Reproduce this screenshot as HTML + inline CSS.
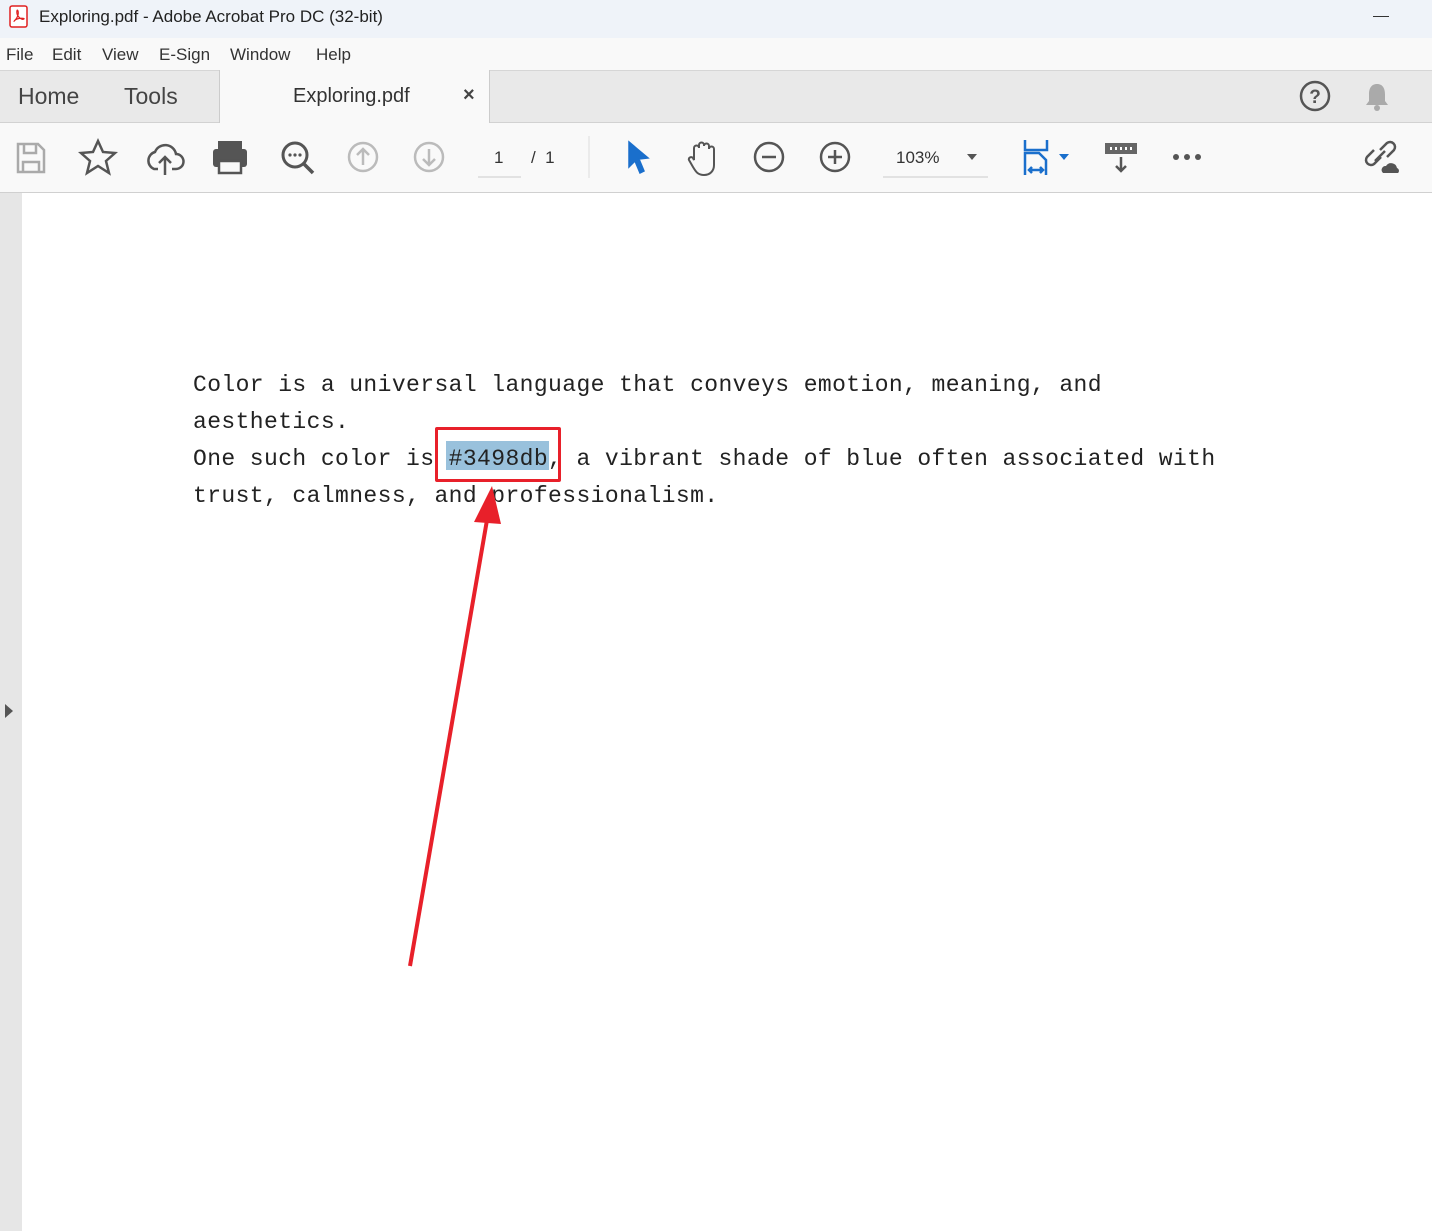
<!DOCTYPE html><html><head><style>
body{margin:0;width:1432px;height:1231px;position:relative;overflow:hidden;font-family:"Liberation Sans",sans-serif;background:#fff}
.a{position:absolute}
.t{color:#222;font-size:17px}
.m{font-size:17px;color:#333;top:45px}
.doc{font-family:"Liberation Mono",monospace;font-size:23px;letter-spacing:0.4px;color:#222;white-space:pre;line-height:37px}
</style></head><body>
<div class="a" style="left:0;top:0;width:1432px;height:38px;background:#eff3f9"></div>
<svg class="a" style="left:9px;top:5px" width="20" height="24"><rect x="1" y="1" width="17" height="21" rx="2" fill="#fff" stroke="#e02020" stroke-width="1.5"/><path d="M5 16c3-2 5-7 4-10s-2 2 0 5 5 4 6 3-4-1-7 0-3 3-3 2" fill="none" stroke="#e02020" stroke-width="1.2"/></svg>
<div class="a t" style="left:39px;top:7px">Exploring.pdf - Adobe Acrobat Pro DC (32-bit)</div>
<div class="a" style="left:1373px;top:16px;width:16px;height:1px;background:#333"></div>
<div class="a" style="left:0;top:38px;width:1432px;height:32px;background:#f9f9f9;border-bottom:1px solid #d6d6d6"></div>
<div class="a m" style="left:6px">File</div><div class="a m" style="left:52px">Edit</div><div class="a m" style="left:102px">View</div><div class="a m" style="left:159px">E-Sign</div><div class="a m" style="left:230px">Window</div><div class="a m" style="left:316px">Help</div>
<div class="a" style="left:0;top:71px;width:1432px;height:51px;background:#e9e9e9;border-bottom:1px solid #d2d2d2"></div>
<div class="a" style="left:219px;top:70px;width:269px;height:53px;background:#f9f9f9;border-left:1px solid #ccc;border-right:1px solid #ccc"></div>
<div class="a" style="left:18px;top:83px;font-size:23px;color:#444">Home</div>
<div class="a" style="left:124px;top:83px;font-size:23px;color:#444">Tools</div>
<div class="a" style="left:293px;top:85px;font-size:20px;color:#333">Exploring.pdf</div>
<div class="a" style="left:463px;top:84px;font-size:20px;color:#444;font-weight:bold">×</div>
<svg class="a" style="left:1298px;top:80px" width="34" height="34"><circle cx="17" cy="16" r="14" fill="none" stroke="#555" stroke-width="2.5"/><text x="17" y="23" font-size="19" text-anchor="middle" fill="#555" font-family="Liberation Sans" font-weight="bold">?</text></svg>
<svg class="a" style="left:1362px;top:81px" width="30" height="32"><path d="M15 3c-6 0-8 5-8 10v7l-3 4h22l-3-4v-7c0-5-2-10-8-10z" fill="#aaa"/><circle cx="15" cy="27" r="3" fill="#aaa"/></svg>
<div class="a" style="left:0;top:123px;width:1432px;height:69px;background:#f9f9f9;border-bottom:1px solid #d0d0d0"></div>
<svg class="a" style="left:0;top:123px" width="1432" height="69" fill="none" stroke-width="2.5">
<g stroke="#aaa"><path d="M18 21h20l6 6v22H18z"/><path d="M24 21v9h12v-9M23 49v-10h16v10"/></g>
<path d="M98 18l5 11 12 1-9 8 3 12-11-7-11 7 3-12-9-8 12-1z" stroke="#555"/>
<path d="M158 46h-4a9 9 0 0 1 1-17 11 11 0 0 1 21 2 7 7 0 0 1 0 15h-4M165 52V34m-6 6 6-6 6 6" stroke="#555"/>
<g fill="#555"><rect x="218" y="18" width="24" height="8"/><rect x="213" y="26" width="34" height="18" rx="3"/><rect x="219" y="38" width="22" height="12" fill="#f9f9f9" stroke="#555" stroke-width="2.5"/></g>
<circle cx="295" cy="32" r="12" stroke="#555" stroke-width="3"/><path d="M304 41l9 9" stroke="#555" stroke-width="3.5"/><g fill="#555"><circle cx="290" cy="32" r="1.6"/><circle cx="295" cy="32" r="1.6"/><circle cx="300" cy="32" r="1.6"/></g>
<g stroke="#bbb"><circle cx="363" cy="34" r="14"/><path d="M363 42V26m-6 6 6-6 6 6"/><circle cx="429" cy="34" r="14"/><path d="M429 26v16m-6-6 6 6 6-6"/></g>
<path d="M478 54h43" stroke="#ccc" stroke-width="1"/>
<path d="M589 13v42" stroke="#ddd" stroke-width="1"/>
<path d="M629 19l19 16-9 1 5 12-4 2-5-12-6 6z" fill="#1a6fcc" stroke="#1a6fcc" stroke-width="1.5"/>
<path d="M694 34v-9a2.5 2.5 0 0 1 5 0v-3a2.5 2.5 0 0 1 5 0v1a2.5 2.5 0 0 1 5 0v3a2.5 2.5 0 0 1 5 0v16c0 6-4 10-10 10s-8-3-11-8l-4-7c-1-2 2-4 4-2l1 2z" stroke="#555" stroke-width="2"/>
<circle cx="769" cy="34" r="14" stroke="#555"/><path d="M762 34h14" stroke="#555"/>
<circle cx="835" cy="34" r="14" stroke="#555"/><path d="M828 34h14M835 27v14" stroke="#555"/>
<path d="M883 54h105" stroke="#ccc" stroke-width="1"/>
<path d="M967 31h10l-5 6z" fill="#555" stroke="none"/>
<g stroke="#1a6fcc"><path d="M1025 17v10h22V17M1025 52V30h14l7 7v15M1030 47h12m-10-3-3 3 3 3m8-6 3 3-3 3"/></g>
<path d="M1059 31h10l-5 6z" fill="#1a6fcc" stroke="none"/>
<rect x="1105" y="20" width="32" height="11" fill="#666" stroke="none"/><g fill="#fff"><rect x="1110" y="24" width="2" height="3"/><rect x="1115" y="24" width="2" height="3"/><rect x="1120" y="24" width="2" height="3"/><rect x="1125" y="24" width="2" height="3"/><rect x="1130" y="24" width="2" height="3"/></g>
<path d="M1121 34v14m-5-5 5 5 5-5" stroke="#555"/>
<g fill="#555" stroke="none"><circle cx="1176" cy="34" r="3"/><circle cx="1187" cy="34" r="3"/><circle cx="1198" cy="34" r="3"/></g>
<path d="M1381 34l-7 7a5 5 0 0 1-7-7l7-7M1380 27l7-7a5 5 0 0 1 7 7l-7 7M1375 38l10-10" stroke="#555" stroke-width="2.5"/>
<path d="M1383 50a4 4 0 0 1 3-7 6 6 0 0 1 11 2 3 3 0 0 1 1 5z" fill="#555" stroke="none"/>
</svg>
<div class="a" style="left:494px;top:148px;font-size:17px;color:#333">1</div>
<div class="a" style="left:531px;top:148px;font-size:17px;color:#333">/&nbsp;&nbsp;1</div>
<div class="a" style="left:896px;top:148px;font-size:17px;color:#333">103%</div>
<div class="a" style="left:0;top:193px;width:22px;height:1038px;background:#e6e6e6"></div>
<svg class="a" style="left:4px;top:703px" width="10" height="16"><path d="M1 1l8 7-8 7z" fill="#555"/></svg>
<div class="a" style="left:446px;top:441px;width:103px;height:29px;background:#99c1dc"></div>
<div class="a doc" style="left:193px;top:367px">Color is a universal language that conveys emotion, meaning, and
aesthetics.
One such color is #3498db, a vibrant shade of blue often associated with
trust, calmness, and professionalism.</div>
<div class="a" style="left:435px;top:427px;width:120px;height:49px;border:3px solid #e8202a;border-radius:2px"></div>
<svg class="a" style="left:0;top:0" width="1432" height="1231"><path d="M410 966L487 520" stroke="#e8202a" stroke-width="4"/><path d="M492 486L474 522L501 524z" fill="#e8202a"/></svg>
</body></html>
